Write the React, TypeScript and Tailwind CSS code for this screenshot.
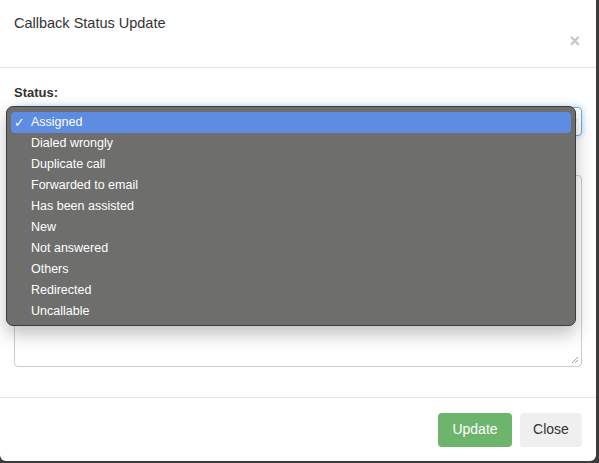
import React from "react";

const STATUSES = [
  "Assigned",
  "Dialed wrongly",
  "Duplicate call",
  "Forwarded to email",
  "Has been assisted",
  "New",
  "Not answered",
  "Others",
  "Redirected",
  "Uncallable",
];

function StatusMenu({ selected }: { selected: string }) {
  return (
    <div className="absolute left-[6px] top-[106px] w-[570px] rounded-[7px] border border-[#3c3c3c] bg-[#6e6e6d] px-[4px] pb-[3px] pt-[5px] shadow-[0_8px_18px_rgba(0,0,0,0.25)]">
      {STATUSES.map((s) => (
        <div
          key={s}
          className={`flex h-[21px] items-center rounded-[4px] text-[12.5px] leading-none text-white ${
            s === selected ? "bg-[#5e8ce2]" : ""
          }`}
        >
          <span className="w-[20px] pl-[3px] text-[13px]">{s === selected ? "✓" : ""}</span>
          <span>{s}</span>
        </div>
      ))}
    </div>
  );
}

export default function App() {
  return (
    <div
      className="relative h-[463px] w-[599px] overflow-hidden bg-[#3b3b3b]"
      style={{ fontFamily: '"Liberation Sans", Arial, sans-serif' }}
    >
      <div className="flex h-[461px] w-[596px] flex-col rounded-b-[6px] bg-white">
        {/* header */}
        <div className="relative h-[68px] border-b border-[#e5e5e5] px-[14px] pt-[14px]">
          <h4 className="text-[14.5px] leading-[18px] text-[#333]">Callback Status Update</h4>
          <span className="absolute right-[16px] top-[32px] text-[18px] font-bold leading-none text-[#c4c4c4]">×</span>
        </div>

        {/* body */}
        <div className="flex flex-1 flex-col px-[14px] pt-[17px]">
          <label className="text-[13px] font-bold leading-[16px] text-[#333]">Status:</label>
          <div className="mt-[6px] flex h-[29px] items-center justify-end rounded-[4px] border border-[#66afe9] bg-white pr-[4px] shadow-[0_0_6px_rgba(102,175,233,0.5)]">
            <span className="text-[9px] text-[#555]">▾</span>
          </div>
          <div className="relative mt-[39px] h-[192px] rounded-[4px] border border-[#ccc] bg-white">
            <svg className="absolute bottom-[2px] right-[2px]" width="8" height="8" viewBox="0 0 8 8">
              <path d="M7 1L1 7M7 4L4 7" stroke="#888" strokeWidth="0.8" />
            </svg>
          </div>
        </div>

        {/* footer */}
        <div className="mt-[30px] flex h-[64px] items-center justify-end gap-[8px] border-t border-[#e5e5e5] px-[14px]">
          <button className="h-[34px] w-[74px] rounded-[4px] bg-[#6db46d] text-[14px] text-white">Update</button>
          <button className="h-[34px] w-[62px] rounded-[4px] bg-[#efefef] text-[14px] text-[#333]">Close</button>
        </div>
      </div>

      <StatusMenu selected="Assigned" />
    </div>
  );
}
